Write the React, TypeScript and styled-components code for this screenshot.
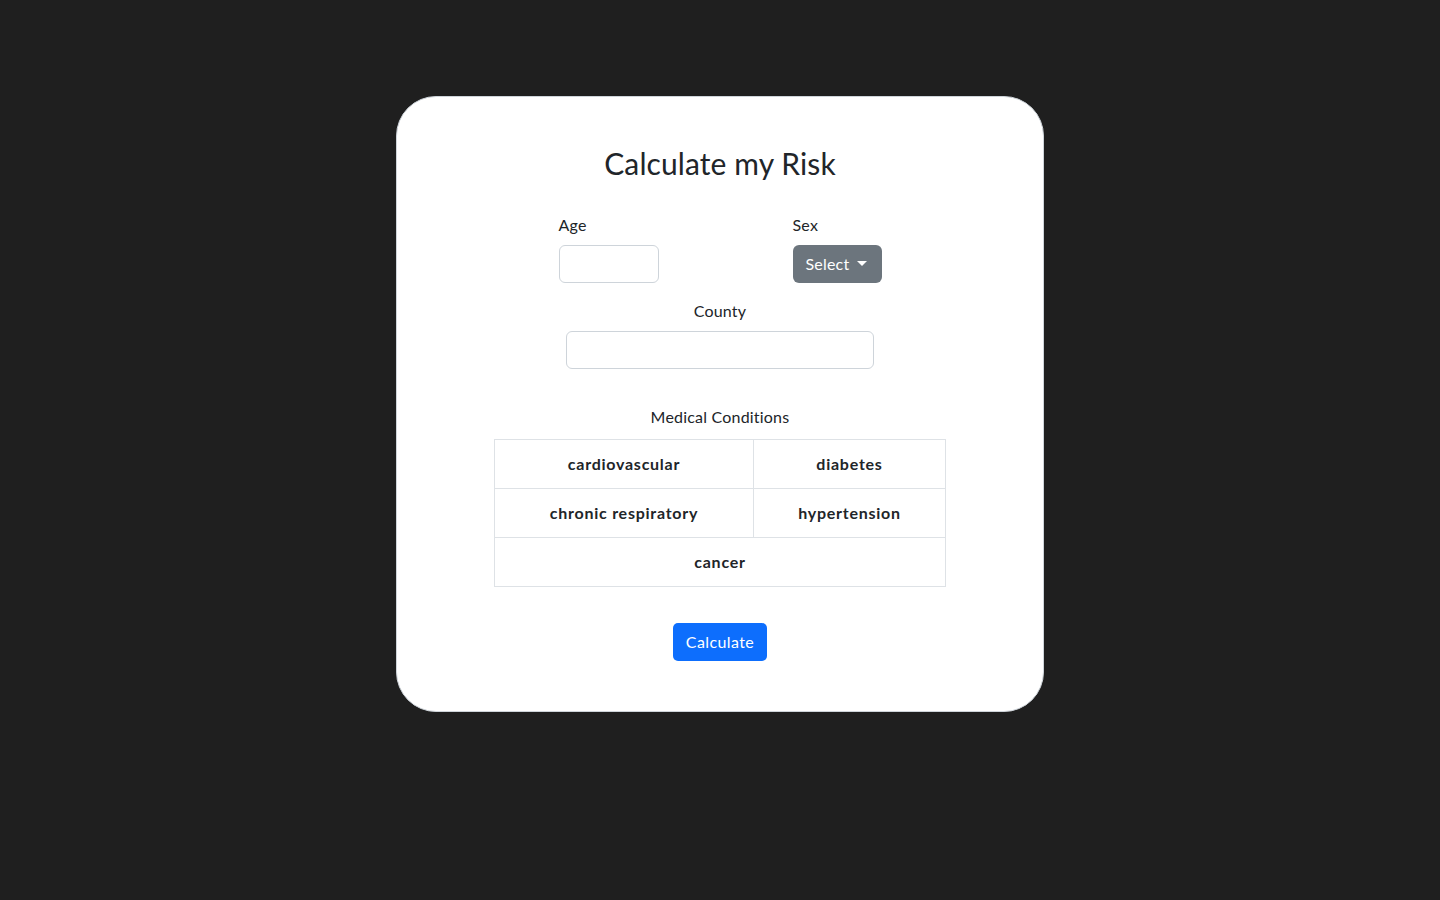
import React from "react";
import styled, { createGlobalStyle } from "styled-components";

const Global = createGlobalStyle`
  html, body { margin: 0; padding: 0; }
  body {
    background: #1f1f1f;
    font-family: "Lato", "Noto Sans", sans-serif;
    color: #212529;
    font-size: 16px;
    line-height: 1.5;
    letter-spacing: 0.2px;
  }
  * { box-sizing: border-box; }
`;

const Page = styled.div`
  min-height: 900px;
  display: flex;
  justify-content: center;
  align-items: flex-start;
  padding-top: 96px;
`;

const Card = styled.div`
  width: 648px;
  height: 616px;
  background: #fff;
  border: 1px solid #ced4da;
  border-radius: 40px;
  display: flex;
  flex-direction: column;
  align-items: center;
  padding-top: 48px;
`;

const Title = styled.h2`
  margin: 0 0 32px;
  font-size: 30px;
  font-weight: 400;
  line-height: 36px;
  letter-spacing: 0.1px;
`;

const TopRow = styled.div`
  display: flex;
  gap: 134px;
`;

const Field = styled.div<{ $center?: boolean }>`
  display: flex;
  flex-direction: column;
  align-items: ${(p) => (p.$center ? "center" : "flex-start")};
`;

const Label = styled.label`
  display: block;
  margin-bottom: 8px;
  font-size: 16px;
  line-height: 24px;
`;

const Input = styled.input<{ $w: number }>`
  width: ${(p) => p.$w}px;
  height: 38px;
  border: 1px solid #ced4da;
  border-radius: 6px;
  padding: 6px 12px;
  font: inherit;
  background: #fff;
`;

const SelectBtn = styled.button`
  height: 38px;
  width: 89px;
  border: none;
  border-radius: 6px;
  background: #6c757d;
  color: #fff;
  font: inherit;
  letter-spacing: 0.2px;
  padding: 0 13px;
  display: flex;
  align-items: center;
  gap: 8px;
  &::after {
    content: "";
    border-top: 5px solid #fff;
    border-left: 5px solid transparent;
    border-right: 5px solid transparent;
    margin-top: -2px;
  }
`;

const CountyField = styled(Field)`
  margin-top: 16px;
`;

const SectionLabel = styled.div`
  margin-top: 36px;
  margin-bottom: 10px;
  line-height: 24px;
`;

const Table = styled.table`
  width: 452px;
  border-collapse: collapse;
`;

const Cell = styled.td`
  border: 1px solid #dee2e6;
  text-align: center;
  font-weight: 700;
  letter-spacing: 0.75px;
  padding: 12px 8px;
  height: 49px;
  line-height: 24px;
`;

const CalcBtn = styled.button`
  margin-top: 36px;
  height: 38px;
  width: 94px;
  border: none;
  border-radius: 5px;
  background: #0d6efd;
  color: #fff;
  font: inherit;
  letter-spacing: 0.4px;
`;

export default function App() {
  return (
    <>
      <Global />
      <Page>
        <Card>
          <Title>Calculate my Risk</Title>
          <TopRow>
            <Field>
              <Label>Age</Label>
              <Input $w={100} />
            </Field>
            <Field>
              <Label>Sex</Label>
              <SelectBtn>Select</SelectBtn>
            </Field>
          </TopRow>
          <CountyField $center>
            <Label>County</Label>
            <Input $w={308} />
          </CountyField>
          <SectionLabel>Medical Conditions</SectionLabel>
          <Table>
            <tbody>
              <tr>
                <Cell style={{ width: 259 }}>cardiovascular</Cell>
                <Cell>diabetes</Cell>
              </tr>
              <tr>
                <Cell>chronic respiratory</Cell>
                <Cell>hypertension</Cell>
              </tr>
              <tr>
                <Cell colSpan={2}>cancer</Cell>
              </tr>
            </tbody>
          </Table>
          <CalcBtn>Calculate</CalcBtn>
        </Card>
      </Page>
    </>
  );
}
